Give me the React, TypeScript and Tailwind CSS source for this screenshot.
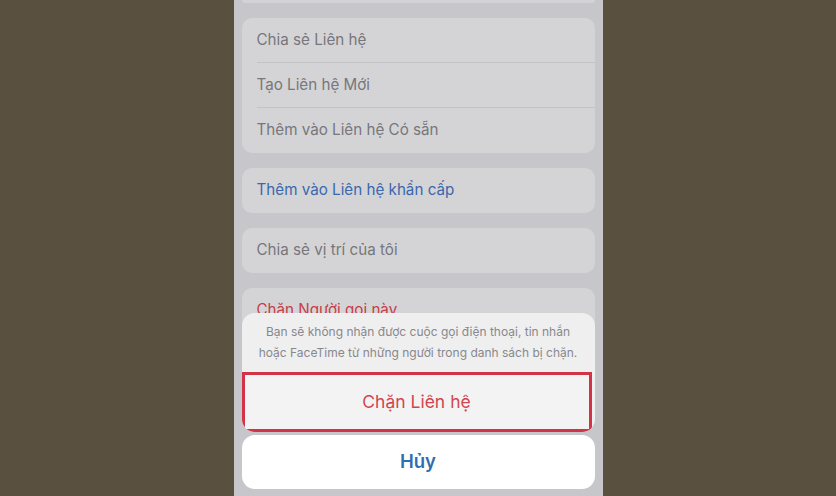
const font = { fontFamily: 'Inter, "Noto Sans", sans-serif' };

function Row({ label, color, divider }: { label: string; color: string; divider?: boolean }) {
  return (
    <div className="flex h-[45px] items-center pl-[15px]">
      <div
        className={`flex h-full flex-1 items-center text-[15.2px] ${color} ${
          divider ? 'border-b border-[#c3c3c6]' : ''
        }`}
      >
        {label}
      </div>
    </div>
  );
}

export default function App() {
  return (
    <div className="flex h-[496px] w-[836px] justify-center overflow-hidden bg-[#5a5040]" style={font}>
      <div className="relative flex w-[369px] flex-col gap-[15px] bg-[#c7c7cb] px-2">
        <div className="h-[3px] rounded-b-[10px] bg-[#d3d3d6]" />

        <div className="overflow-hidden rounded-[10px] bg-[#d4d4d7]">
          <Row label="Chia sẻ Liên hệ" color="text-[#77777b]" divider />
          <Row label="Tạo Liên hệ Mới" color="text-[#77777b]" divider />
          <Row label="Thêm vào Liên hệ Có sẵn" color="text-[#77777b]" />
        </div>

        <div className="rounded-[10px] bg-[#d4d4d7]">
          <Row label="Thêm vào Liên hệ khẩn cấp" color="text-[#3a68ad]" />
        </div>

        <div className="rounded-[10px] bg-[#d4d4d7]">
          <Row label="Chia sẻ vị trí của tôi" color="text-[#77777b]" />
        </div>

        <div className="rounded-[10px] bg-[#d4d4d7]">
          <Row label="Chặn Người gọi này" color="text-[#c63d48]" />
        </div>

        <div className="absolute bottom-[7px] left-2 right-2 flex flex-col gap-[3px]">
          <div className="overflow-hidden rounded-[13px] bg-[#efeff0]">
            <div className="px-2 pb-[9px] pt-[8px] text-center text-[12px] leading-[21px] text-[#88888c]">
              Bạn sẽ không nhận được cuộc gọi điện thoại, tin nhắn
              <br />
              hoặc FaceTime từ những người trong danh sách bị chặn.
            </div>
            <div className="mr-[3px] flex h-[60px] items-center justify-center border-[3px] border-[#d13446] bg-[#f3f3f4] text-[17.5px] text-[#d2454f]">
              Chặn Liên hệ
            </div>
          </div>
          <div className="flex h-[54px] items-center justify-center rounded-[13px] bg-white text-[18.5px] font-semibold text-[#2f6db3]">
            Hủy
          </div>
        </div>
      </div>
    </div>
  );
}
